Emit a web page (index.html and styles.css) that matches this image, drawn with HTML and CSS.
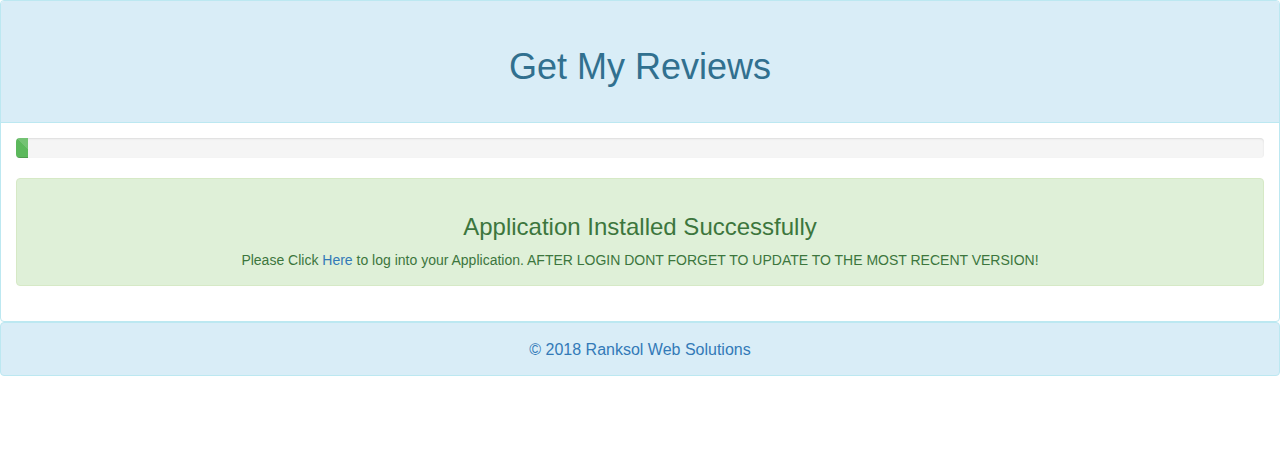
FILE: index.html
```html
<!DOCTYPE html>
<html lang="en">
<head>
<meta charset="utf-8">
<title>Get My Reviews</title>
<link rel="stylesheet" href="styles.css">
</head>
<body>
<div class="panel">
  <div class="panel-heading">
    <h1 class="title">Get My Reviews</h1>
  </div>
  <div class="panel-body">
    <div class="progress">
      <div class="progress-bar" style="width: 1%"></div>
    </div>
    <div class="alert">
      <h3 class="alert-title">Application Installed Successfully</h3>
      <p class="alert-text">Please Click <a href="#" class="link">Here</a> to log into your Application. AFTER LOGIN DONT FORGET TO UPDATE TO THE MOST RECENT VERSION!</p>
    </div>
  </div>
</div>
<div class="footer">
  <a href="#" class="footer-link">© 2018 Ranksol Web Solutions</a>
</div>
</body>
</html>
```
FILE: styles.css
```css
* { box-sizing: border-box; }
html, body { margin: 0; padding: 0; }
body {
  font-family: "Liberation Sans", Arial, Helvetica, sans-serif;
  font-size: 14px;
  line-height: 1.42857;
  color: #333;
  background: #fff;
}
.panel {
  border: 1px solid #bce8f1;
  border-radius: 4px;
  background: #fff;
}
.panel-heading {
  background: #d9edf7;
  color: #31708f;
  border-bottom: 1px solid #bce8f1;
  border-radius: 3px 3px 0 0;
  padding: 46px 15px 35px;
  text-align: center;
}
.title {
  margin: 0;
  font-size: 36px;
  font-weight: 500;
  line-height: 40px;
}
.panel-body {
  padding: 15px;
}
.progress {
  height: 20px;
  margin-bottom: 20px;
  background: #f5f5f5;
  border-radius: 4px;
  overflow: hidden;
  box-shadow: inset 0 1px 2px rgba(0,0,0,0.1);
}
.progress-bar {
  height: 100%;
  background-color: #5cb85c;
  background-image: linear-gradient(45deg, rgba(255,255,255,0.15) 25%, transparent 25%, transparent 50%, rgba(255,255,255,0.15) 50%, rgba(255,255,255,0.15) 75%, transparent 75%, transparent);
  background-size: 40px 40px;
  box-shadow: inset 0 -1px 0 rgba(0,0,0,0.15);
}
.alert {
  padding: 15px;
  margin-bottom: 20px;
  border: 1px solid #d6e9c6;
  border-radius: 4px;
  background: #dff0d8;
  color: #3c763d;
  text-align: center;
}
.alert-title {
  margin: 20px 0 10px;
  font-size: 24px;
  font-weight: 500;
  line-height: 1.1;
}
.alert-text {
  margin: 0;
  padding-top: 1px;
  line-height: 19px;
}
.link {
  color: #337ab7;
  text-decoration: none;
}
.footer {
  background: #d9edf7;
  border: 1px solid #bce8f1;
  border-radius: 4px;
  padding: 16px 15px 14px;
  text-align: center;
  font-size: 16px;
  line-height: 22px;
}
.footer-link {
  color: #337ab7;
  text-decoration: none;
}
```
